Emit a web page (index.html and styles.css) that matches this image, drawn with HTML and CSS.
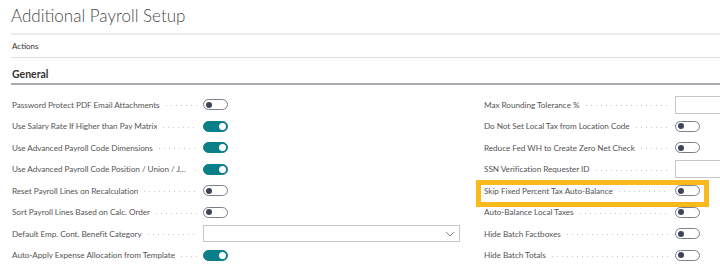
FILE: index.html
```html
<!DOCTYPE html>
<html lang="en">
<head>
    <meta charset="UTF-8">
    <title>Additional Payroll Setup</title>
    <link rel="stylesheet" href="styles.css">
</head>
<body>
    <div class="page">
        <h1 class="title">Additional Payroll Setup</h1>
        <div class="actions">Actions</div>
        <div class="group-head">General</div>

        <div class="fields">
            <!-- left column -->
            <div class="col">
                <div class="row"><span class="label"><span class="text">Password Protect PDF Email Attachments</span><span class="dots"></span></span><span class="toggle"></span></div>
                <div class="row"><span class="label"><span class="text">Use Salary Rate If Higher than Pay Matrix</span><span class="dots"></span></span><span class="toggle on"></span></div>
                <div class="row"><span class="label"><span class="text">Use Advanced Payroll Code Dimensions</span><span class="dots"></span></span><span class="toggle on"></span></div>
                <div class="row"><span class="label"><span class="text">Use Advanced Payroll Code Position / Union / Job Class</span><span class="dots short"></span></span><span class="toggle on"></span></div>
                <div class="row"><span class="label"><span class="text">Reset Payroll Lines on Recalculation</span><span class="dots"></span></span><span class="toggle"></span></div>
                <div class="row"><span class="label"><span class="text">Sort Payroll Lines Based on Calc. Order</span><span class="dots"></span></span><span class="toggle"></span></div>
                <div class="row"><span class="label"><span class="text">Default Emp. Cont. Benefit Category</span><span class="dots"></span></span>
                    <span class="select">
                        <svg width="10" height="6" viewBox="0 0 10 6"><path d="M1 1 L5 5 L9 1" fill="none" stroke="#8a8a8a" stroke-width="1"/></svg>
                    </span>
                </div>
                <div class="row"><span class="label"><span class="text">Auto-Apply Expense Allocation from Template</span><span class="dots"></span></span><span class="toggle on"></span></div>
            </div>

            <!-- right column -->
            <div class="col">
                <div class="row"><span class="label"><span class="text">Max Rounding Tolerance %</span><span class="dots"></span></span><span class="input"></span></div>
                <div class="row"><span class="label"><span class="text">Do Not Set Local Tax from Location Code</span><span class="dots"></span></span><span class="toggle"></span></div>
                <div class="row"><span class="label"><span class="text">Reduce Fed WH to Create Zero Net Check</span><span class="dots"></span></span><span class="toggle"></span></div>
                <div class="row"><span class="label"><span class="text">SSN Verification Requester ID</span><span class="dots"></span></span><span class="input"></span></div>
                <div class="row highlight"><span class="label"><span class="text">Skip Fixed Percent Tax Auto-Balance</span><span class="dots"></span></span><span class="toggle"></span></div>
                <div class="row"><span class="label"><span class="text">Auto-Balance Local Taxes</span><span class="dots"></span></span><span class="toggle"></span></div>
                <div class="row"><span class="label"><span class="text">Hide Batch Factboxes</span><span class="dots"></span></span><span class="toggle"></span></div>
                <div class="row"><span class="label"><span class="text">Hide Batch Totals</span><span class="dots"></span></span><span class="toggle"></span></div>
            </div>
        </div>
    </div>
</body>
</html>
```

FILE: styles.css
```css
body {
    margin: 0;
    background-color: #fff;
    font-family: Lato, "Open Sans", sans-serif;
    color: #555;
    overflow: hidden;
}

.page {
    padding-left: 11px;
    width: 760px;
}

.title {
    margin: 0;
    height: 35px;
    font-size: 17px;
    font-weight: 300;
    line-height: 31px;
    color: #4a4a4a;
    border-bottom: 2px solid #ebebeb;
    box-sizing: border-box;
}

.actions {
    height: 23px;
    line-height: 22px;
    font-size: 8px;
    color: #333;
    padding-left: 1px;
    border-bottom: 1px solid #e0e0e0;
    box-sizing: border-box;
}

.group-head {
    height: 27px;
    line-height: 32px;
    font-size: 10.5px;
    font-weight: 700;
    color: #333;
    padding-left: 1px;
    border-bottom: 2px solid #a6aaae;
    box-sizing: border-box;
}

.fields {
    display: grid;
    grid-template-columns: 449px 1fr;
    column-gap: 23px;
    margin-top: 9px;
}

.row {
    height: 21.5px;
    display: flex;
    align-items: center;
    gap: 6px;
    font-size: 8.2px;
    letter-spacing: -0.05px;
    position: relative;
}

.label {
    width: 186px;
    display: flex;
    align-items: center;
    flex-shrink: 0;
    white-space: nowrap;
    overflow: hidden;
}

.text {
    overflow: hidden;
    text-overflow: ellipsis;
    flex-shrink: 1;
    padding-left: 1px;
}

.dots {
    flex: 1;
    min-width: 8px;
    height: 1px;
    margin: 2px 0 0 6px;
    background: repeating-linear-gradient(to right, #c6c6c6 0 1px, transparent 1px 5px);
}

.dots.short {
    flex: 0 0 2px;
    min-width: 2px;
    margin-left: 5px;
}

.toggle {
    width: 25px;
    height: 11px;
    border: 1px solid #7b7f88;
    border-radius: 7px;
    box-sizing: border-box;
    position: relative;
    background-color: #fff;
}

.toggle::after {
    content: "";
    position: absolute;
    left: 2px;
    top: 1.5px;
    width: 6px;
    height: 6px;
    border-radius: 50%;
    background-color: #3d4658;
}

.toggle.on {
    background-color: #0b7f88;
    border-color: #0b7f88;
}

.toggle.on::after {
    left: auto;
    right: 1.5px;
    top: 1px;
    width: 7px;
    height: 7px;
    background-color: #fff;
}

.select {
    width: 257px;
    height: 17px;
    border: 1px solid #c6c6c6;
    box-sizing: border-box;
    display: flex;
    align-items: center;
    justify-content: flex-end;
    padding-right: 4px;
}

.input {
    width: 70px;
    height: 18px;
    border: 1px solid #c6c6c6;
    box-sizing: border-box;
}

.highlight::after {
    content: "";
    position: absolute;
    left: -7px;
    top: 0;
    width: 233px;
    height: 27px;
    border: 5px solid #fbba1c;
    box-sizing: border-box;
    pointer-events: none;
}
```
